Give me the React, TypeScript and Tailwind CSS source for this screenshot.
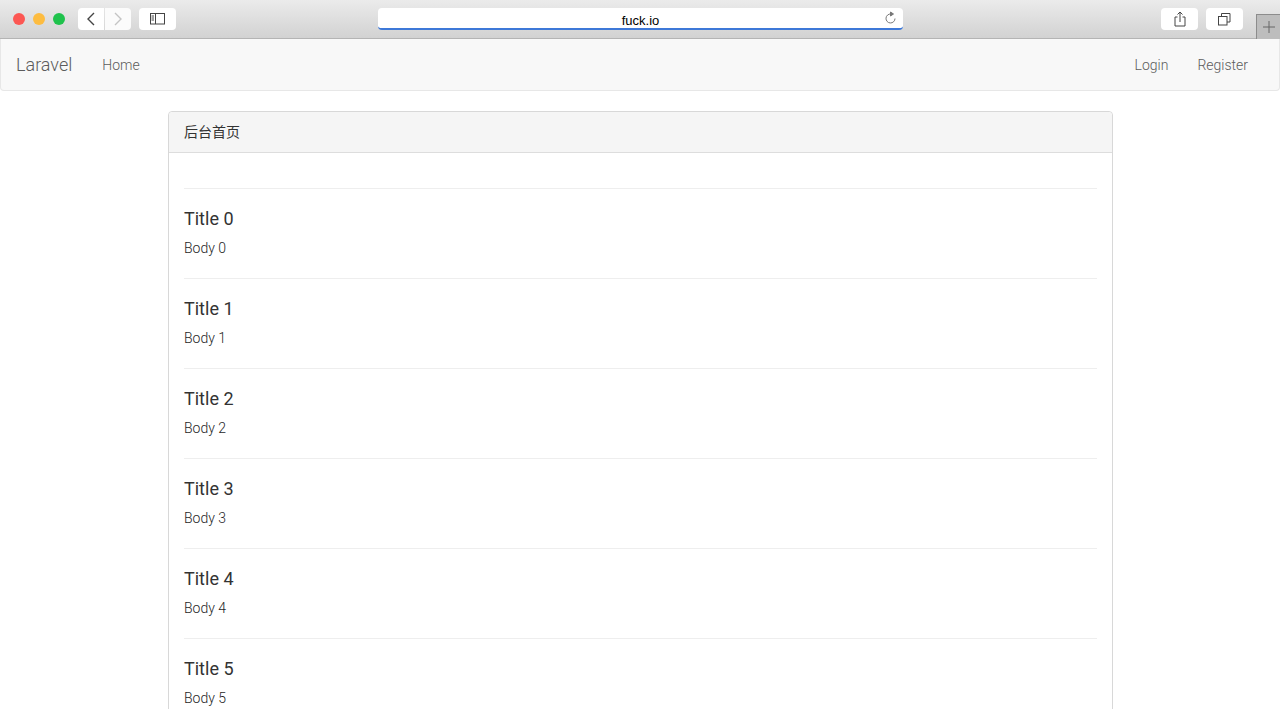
import React from "react";

const posts = [0, 1, 2, 3, 4, 5, 6];

const BrowserBar = () => {
  return (
    <div className="h-[39px] flex items-start bg-gradient-to-b from-[#ebebeb] to-[#d2d2d2] border-b border-[#b4b4b4] relative">
      <div className="flex items-center gap-2 ml-[13px] mt-[13px]">
        <div className="w-3 h-3 rounded-full bg-[#fc5753]" />
        <div className="w-3 h-3 rounded-full bg-[#fdbc40]" />
        <div className="w-3 h-3 rounded-full bg-[#1fc24c]" />
      </div>
      <div className="flex ml-[13px] mt-2 gap-px">
        <div className="w-[26px] h-[22px] bg-white rounded-l flex items-center justify-center">
          <svg width="10" height="14" viewBox="0 0 10 14" fill="none" stroke="#444" strokeWidth="1.4">
            <path d="M8 1 L2 7 L8 13" />
          </svg>
        </div>
        <div className="w-[26px] h-[22px] bg-[#fbfbfb] rounded-r flex items-center justify-center">
          <svg width="10" height="14" viewBox="0 0 10 14" fill="none" stroke="#c4c4c4" strokeWidth="1.4">
            <path d="M2 1 L8 7 L2 13" />
          </svg>
        </div>
      </div>
      <div className="w-[37px] h-[22px] bg-white rounded ml-[8px] mt-2 flex items-center justify-center">
        <svg width="16" height="12" viewBox="0 0 16 12" fill="none" stroke="#444">
          <rect x="0.5" y="0.5" width="14" height="10.5" />
          <path d="M5.5 0.5 V11 M1.5 3 H4 M1.5 5 H4 M1.5 7 H4" />
        </svg>
      </div>
      <div className="w-[525px] h-[22px] ml-[202px] mt-2 bg-white rounded-sm border-b-2 border-[#3d78d8] flex items-center justify-center relative">
        <span className="font-['Liberation_Sans',sans-serif] text-[13px] leading-[13px] mt-[4px] text-black">fuck.io</span>
        <svg className="absolute right-[6px] top-[3px]" width="13" height="15" viewBox="0 0 13 15" fill="none" stroke="#777">
          <path d="M7 3 A4.5 4.5 0 1 0 11 7.5" />
          <path d="M6.5 1 L9.5 3 L6.5 5 Z" fill="#777" />
        </svg>
      </div>
      <div className="w-[37px] h-[22px] bg-white rounded ml-[258px] mt-2 flex items-center justify-center">
        <svg width="12" height="16" viewBox="0 0 12 16" fill="none" stroke="#444">
          <path d="M3.5 6 H1 V15 H11 V6 H8.5 M6 11 V1 M3.5 3.5 L6 1 L8.5 3.5" />
        </svg>
      </div>
      <div className="w-[37px] h-[22px] bg-white rounded ml-[8px] mt-2 flex items-center justify-center">
        <svg width="13" height="13" viewBox="0 0 13 13" fill="none" stroke="#444">
          <rect x="0.5" y="3.5" width="8.5" height="8.5" />
          <path d="M3.5 3.5 V0.5 H12 V9 H9" />
        </svg>
      </div>
      <div className="absolute right-0 top-[14px] w-6 h-[25px] bg-[#bdbdbd] border-l border-t border-[#8c8c8c] flex items-center justify-center">
        <svg width="12" height="12" viewBox="0 0 12 12" stroke="#666">
          <path d="M6 0 V12 M0 6 H12" />
        </svg>
      </div>
    </div>
  );
};

const Navbar = () => {
  return (
    <nav className="h-[52px] bg-[#f8f8f8] border border-t-0 border-[#e7e7e7] rounded-b flex items-center justify-between font-['Roboto',sans-serif] font-light text-[#5c5c5c]">
      <div className="flex items-center">
        <span className="text-lg ml-[15px]">Laravel</span>
        <span className="text-sm ml-[30px]">Home</span>
      </div>
      <div className="flex items-center gap-[29px] text-sm mr-[31px]">
        <span>Login</span>
        <span>Register</span>
      </div>
    </nav>
  );
};

const App = () => {
  return (
    <div className="h-[709px] overflow-hidden bg-white font-['Roboto',sans-serif] text-[#333]">
      <BrowserBar />
      <Navbar />
      <div className="w-[945px] ml-[168px] mt-5 border border-[#d8d8d8] rounded">
        <div className="h-[41px] bg-[#f5f5f5] border-b border-[#dddddd] rounded-t px-[15px] flex items-center text-sm font-['Roboto','Noto_Sans_CJK_SC',sans-serif]">
          后台首页
        </div>
        <div className="px-[15px] pt-[35px]">
          {posts.map((n) => (
            <div key={n} className="h-[90px] border-t border-[#eeeeee]">
              <h4 className="text-lg leading-5 pt-5">Title {n}</h4>
              <p className="text-sm font-light text-[#1f1f1f] leading-5 mt-[9px]">Body {n}</p>
            </div>
          ))}
        </div>
      </div>
    </div>
  );
};

export default App;
